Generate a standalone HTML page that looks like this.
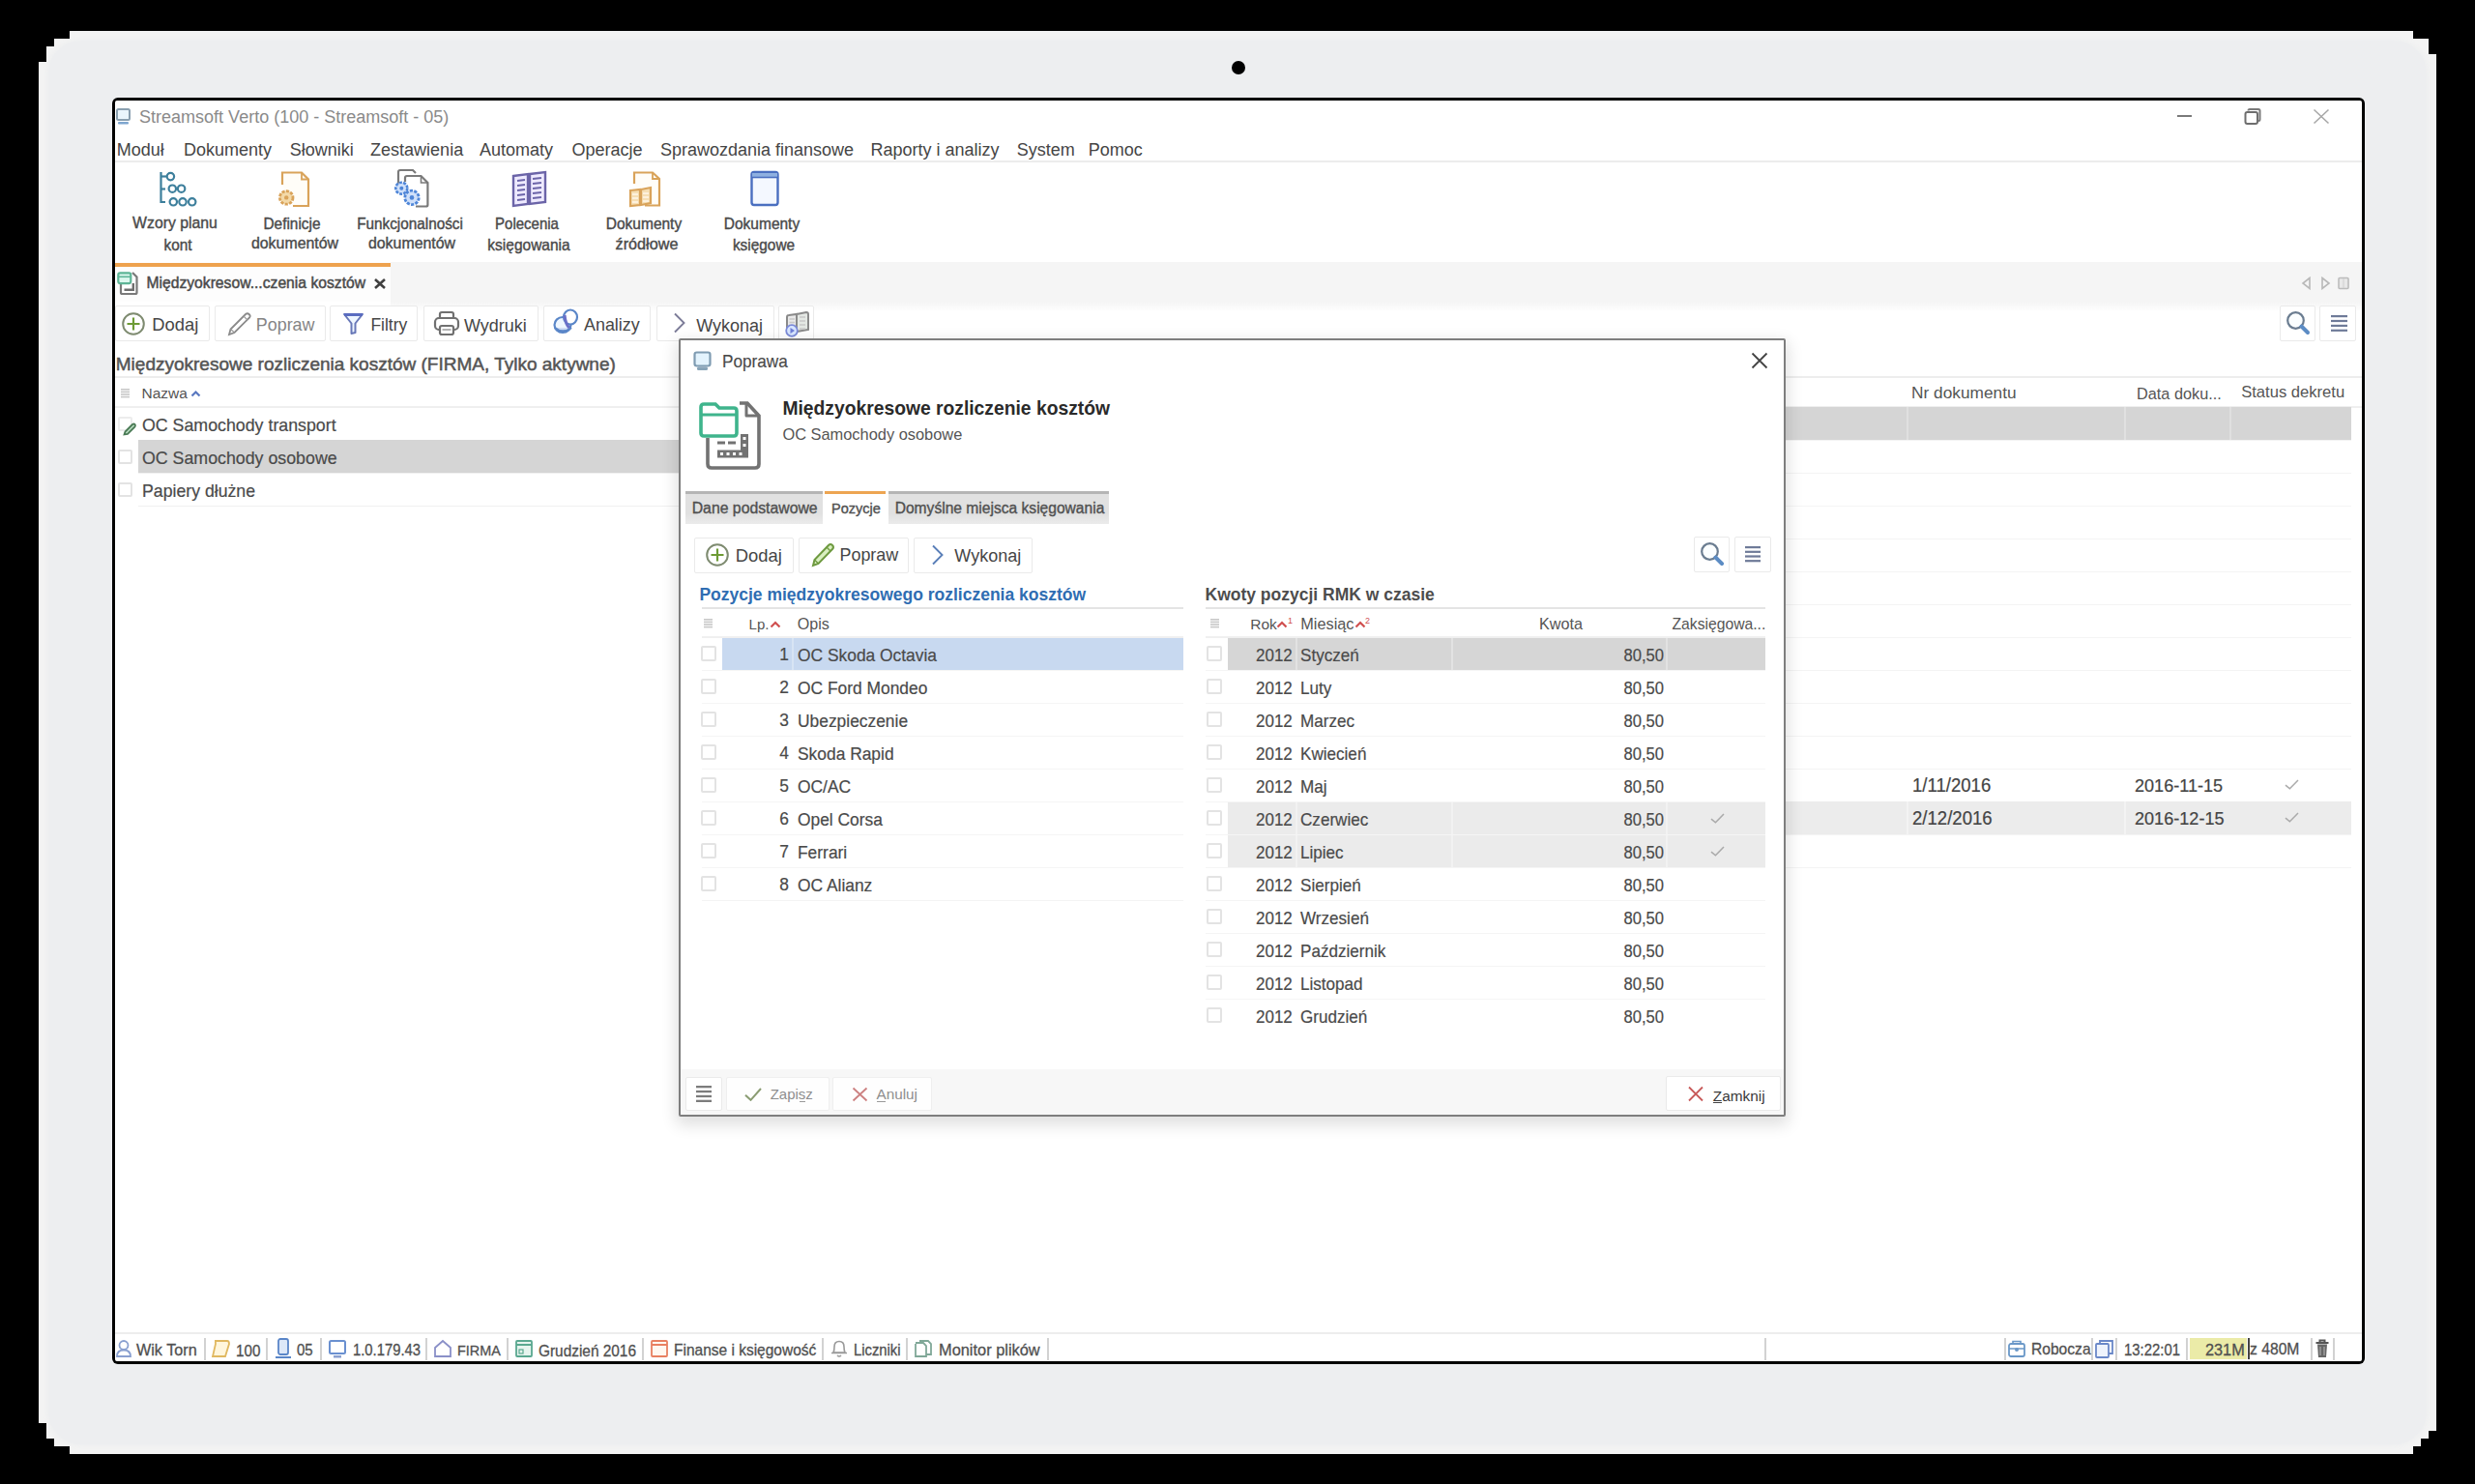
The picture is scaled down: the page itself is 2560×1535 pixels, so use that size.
<!DOCTYPE html><html><head><meta charset="utf-8"><style>
html,body{margin:0;padding:0;background:#000;}
body{width:2560px;height:1535px;position:relative;overflow:hidden;font-family:"Liberation Sans",sans-serif;}
.t{position:absolute;white-space:nowrap;line-height:1em;}
.r{position:absolute;}
</style></head><body>
<div class="r" style="left:40px;top:32px;width:2480px;height:1472px;background:#f3f3f3;"></div>
<div class="r" style="left:50px;top:42px;width:2460px;height:1452px;background:#edeef0;border-radius:34px;box-shadow:0 0 4px 2px #eeeff0;"></div>
<div class="r" style="left:40px;top:32px;width:32px;height:8px;background:#000;"></div>
<div class="r" style="left:40px;top:40px;width:16px;height:8px;background:#000;"></div>
<div class="r" style="left:40px;top:48px;width:8px;height:16px;background:#000;"></div>
<div class="r" style="left:2496px;top:32px;width:24px;height:8px;background:#000;"></div>
<div class="r" style="left:2512px;top:40px;width:8px;height:16px;background:#000;"></div>
<div class="r" style="left:2496px;top:1496px;width:24px;height:8px;background:#000;"></div>
<div class="r" style="left:2504px;top:1488px;width:16px;height:8px;background:#000;"></div>
<div class="r" style="left:2512px;top:1480px;width:8px;height:8px;background:#000;"></div>
<div class="r" style="left:40px;top:1472px;width:8px;height:16px;background:#000;"></div>
<div class="r" style="left:40px;top:1488px;width:16px;height:8px;background:#000;"></div>
<div class="r" style="left:40px;top:1496px;width:32px;height:8px;background:#000;"></div>
<div class="r" style="left:1274px;top:63px;width:14px;height:14px;background:#000;border-radius:50%;"></div>
<div class="r" style="left:116px;top:101px;width:2330px;height:1310px;background:#000;border-radius:6px;"></div>
<div class="r" style="left:119px;top:104px;width:2324px;height:1304px;background:#fff;border-radius:2px;overflow:hidden;"></div>
<svg class="r" style="left:119px;top:111px" width="18" height="20" viewBox="0 0 18 20" fill="none"><rect x="2" y="2" width="13" height="11" rx="1.5" fill="#eaf6fd" stroke="#8aa0b0" stroke-width="2"/><rect x="3" y="15" width="11" height="2.5" rx="1" fill="#7ea6cf"/></svg>
<div class="t" style="left:144.1px;top:112.1px;font-size:18.00px;color:#8a8a8a;">Streamsoft Verto (100 - Streamsoft - 05)</div>
<div class="r" style="left:2252px;top:119px;width:15px;height:2px;background:#7a7a7a;"></div>
<svg class="r" style="left:2320px;top:111px" width="20" height="19" viewBox="0 0 20 19" fill="none"><path d="M5.5 3.5 Q5.5 2 7 2 H16 Q17.5 2 17.5 3.5 V12.5 Q17.5 14 16 14" stroke="#7a7a7a" stroke-width="2"/><rect x="2.5" y="5" width="12.5" height="12" rx="2" stroke="#6e6e6e" stroke-width="2" fill="#fff"/></svg>
<svg class="r" style="left:2392px;top:112px" width="18" height="17" viewBox="0 0 18 17" fill="none"><path d="M1.5 1.5 L16.5 15.5 M16.5 1.5 L1.5 15.5" stroke="#a8a8a8" stroke-width="1.6"/></svg>
<div class="t" style="left:120.8px;top:146.2px;font-size:18.00px;color:#454545;">Moduł</div>
<div class="t" style="left:189.9px;top:146.2px;font-size:18.00px;color:#454545;">Dokumenty</div>
<div class="t" style="left:299.8px;top:146.2px;font-size:18.00px;color:#454545;">Słowniki</div>
<div class="t" style="left:383.1px;top:146.2px;font-size:18.00px;color:#454545;">Zestawienia</div>
<div class="t" style="left:495.9px;top:146.2px;font-size:18.00px;color:#454545;">Automaty</div>
<div class="t" style="left:591.5px;top:146.2px;font-size:18.00px;color:#454545;">Operacje</div>
<div class="t" style="left:683.0px;top:146.2px;font-size:18.00px;color:#454545;">Sprawozdania finansowe</div>
<div class="t" style="left:900.4px;top:146.2px;font-size:18.00px;color:#454545;">Raporty i analizy</div>
<div class="t" style="left:1051.7px;top:146.2px;font-size:18.00px;color:#454545;">System</div>
<div class="t" style="left:1125.7px;top:146.2px;font-size:18.00px;color:#454545;">Pomoc</div>
<div class="r" style="left:119px;top:166px;width:2324px;height:2px;background:#ececec;"></div>
<div class="t" style="left:81.0px;top:222.9px;font-size:16.59px;color:#4a4a4a;-webkit-text-stroke:0.4px #4a4a4a;transform:scaleX(0.9524);transform-origin:center center;width:200px;text-align:center;">Wzory planu</div>
<div class="t" style="left:83.5px;top:244.6px;font-size:16.17px;color:#4a4a4a;-webkit-text-stroke:0.4px #4a4a4a;transform:scaleX(0.9524);transform-origin:center center;width:200px;text-align:center;">kont</div>
<div class="t" style="left:202.3px;top:223.2px;font-size:16.17px;color:#4a4a4a;-webkit-text-stroke:0.4px #4a4a4a;transform:scaleX(0.9524);transform-origin:center center;width:200px;text-align:center;">Definicje</div>
<div class="t" style="left:204.8px;top:244.2px;font-size:16.70px;color:#4a4a4a;-webkit-text-stroke:0.4px #4a4a4a;transform:scaleX(0.9524);transform-origin:center center;width:200px;text-align:center;">dokumentów</div>
<div class="t" style="left:323.8px;top:223.3px;font-size:16.07px;color:#4a4a4a;-webkit-text-stroke:0.4px #4a4a4a;transform:scaleX(0.9524);transform-origin:center center;width:200px;text-align:center;">Funkcjonalności</div>
<div class="t" style="left:326.3px;top:244.2px;font-size:16.70px;color:#4a4a4a;-webkit-text-stroke:0.4px #4a4a4a;transform:scaleX(0.9524);transform-origin:center center;width:200px;text-align:center;">dokumentów</div>
<div class="t" style="left:444.6px;top:223.6px;font-size:15.75px;color:#4a4a4a;-webkit-text-stroke:0.4px #4a4a4a;transform:scaleX(0.9524);transform-origin:center center;width:200px;text-align:center;">Polecenia</div>
<div class="t" style="left:447.1px;top:244.5px;font-size:16.28px;color:#4a4a4a;-webkit-text-stroke:0.4px #4a4a4a;transform:scaleX(0.9524);transform-origin:center center;width:200px;text-align:center;">księgowania</div>
<div class="t" style="left:566.2px;top:223.1px;font-size:16.28px;color:#4a4a4a;-webkit-text-stroke:0.4px #4a4a4a;transform:scaleX(0.9524);transform-origin:center center;width:200px;text-align:center;">Dokumenty</div>
<div class="t" style="left:568.7px;top:243.9px;font-size:17.01px;color:#4a4a4a;-webkit-text-stroke:0.4px #4a4a4a;transform:scaleX(0.9524);transform-origin:center center;width:200px;text-align:center;">źródłowe</div>
<div class="t" style="left:687.7px;top:223.1px;font-size:16.28px;color:#4a4a4a;-webkit-text-stroke:0.4px #4a4a4a;transform:scaleX(0.9524);transform-origin:center center;width:200px;text-align:center;">Dokumenty</div>
<div class="t" style="left:690.2px;top:244.6px;font-size:16.17px;color:#4a4a4a;-webkit-text-stroke:0.4px #4a4a4a;transform:scaleX(0.9524);transform-origin:center center;width:200px;text-align:center;">księgowe</div>
<svg class="r" style="left:162px;top:175px" width="44" height="42" viewBox="0 0 44 42" fill="none"><g stroke="#3d7f9c" stroke-width="2.2" fill="#fff">
<path d="M4.5 3 V34 H9" fill="none"/><path d="M4.5 20.5 H9" fill="none"/><path d="M4.5 7.5 H10" fill="none"/>
<circle cx="14.4" cy="7.6" r="3.7"/><circle cx="16.3" cy="20.2" r="3.7"/><circle cx="25.6" cy="20.2" r="3.7"/>
<circle cx="17.3" cy="33.8" r="3.7"/><circle cx="27" cy="33.8" r="3.7"/><circle cx="36.7" cy="33.8" r="3.7"/></g></svg>
<svg class="r" style="left:282px;top:174px" width="42" height="42" viewBox="0 0 42 42" fill="none"><path d="M10 17 V4.5 H30 L37 11.5 V39 H21" stroke="#d9a35a" stroke-width="2.2" fill="#fffdf8"/><path d="M30 4.5 V11.5 H37" stroke="#d9a35a" stroke-width="1.8" fill="none"/>
<circle cx="14.2" cy="30.4" r="6.8" fill="#f3d9a8" stroke="#d9a35a" stroke-width="2.8" stroke-dasharray="3.2 1.3"/><circle cx="14.2" cy="30.4" r="2.2" fill="#d9a35a"/></svg>
<svg class="r" style="left:406px;top:173px" width="44" height="44" viewBox="0 0 44 44" fill="none"><path d="M6 20 V5 Q6 3 8 3 H21 L24 6" stroke="#7a7a7a" stroke-width="2.2" fill="none"/>
<path d="M13 15 V11 Q13 9 15 9 H29.5 L36.4 16 V39 Q36.4 40.5 34.5 40.5 H24" stroke="#7a7a7a" stroke-width="2.2" fill="#fff"/><path d="M29.5 9 V16 H36.4" stroke="#7a7a7a" stroke-width="1.6" fill="none"/>
<circle cx="9.3" cy="21.7" r="6" fill="#cfe0fa" stroke="#4f86d8" stroke-width="2.6" stroke-dasharray="3 1.2"/><circle cx="9.3" cy="21.7" r="2" fill="#4f86d8"/>
<circle cx="20" cy="31.4" r="7.2" fill="#cfe0fa" stroke="#4f86d8" stroke-width="2.8" stroke-dasharray="3.2 1.3"/><circle cx="20" cy="31.4" r="2.3" fill="#4f86d8"/></svg>
<svg class="r" style="left:527px;top:174px" width="42" height="42" viewBox="0 0 42 42" fill="none"><path d="M4 8 L19 6 V37 L4 39 Z" stroke="#6b64a8" stroke-width="2.4" fill="#eeeaff"/><path d="M21 6 L37 4 V35 L21 37 Z" stroke="#6b64a8" stroke-width="2.4" fill="#eeeaff"/>
<g stroke="#6b64a8" stroke-width="2"><path d="M8 13 L16 12 M8 18 L16 17 M8 23 L16 22 M8 28 L16 27 M8 33 L16 32"/><path d="M24 11 L33 10 M24 16 L33 15 M24 21 L33 20 M24 26 L33 25 M24 31 L33 30"/></g></svg>
<svg class="r" style="left:648px;top:174px" width="40" height="42" viewBox="0 0 40 42" fill="none"><path d="M8 16 V4.5 H27 L34 11 V38.5 H19" stroke="#d9a35a" stroke-width="2.2" fill="#fffdf8"/><path d="M27 4.5 V11 H34" stroke="#d9a35a" stroke-width="1.8" fill="none"/>
<path d="M4 23 L14 22 V38 L4 39 Z M15 22 L25 20 V36 L15 38 Z" stroke="#d9a35a" stroke-width="2.2" fill="#f6dfb5"/>
<g stroke="#fff8ea" stroke-width="1.4"><path d="M6 27 H12 M6 31 H12 M6 35 H12 M17 26 H23 M17 30 H23 M17 34 H23"/></g></svg>
<svg class="r" style="left:773px;top:175px" width="36" height="40" viewBox="0 0 36 40" fill="none"><rect x="4.5" y="3" width="27" height="34" rx="2.5" stroke="#4a6fc0" stroke-width="2.4" fill="#f4f8ff"/><rect x="5" y="4" width="26" height="4" fill="#8fb0e0"/><path d="M4.5 8.5 H31.5" stroke="#4a6fc0" stroke-width="1.6"/></svg>
<div class="r" style="left:119px;top:271px;width:2324px;height:41px;background:#f5f5f5;"></div>
<div class="r" style="left:404px;top:312px;width:2039px;height:9px;background:linear-gradient(#f5f5f5,#fdfdfd);"></div>
<div class="r" style="left:119px;top:271px;width:285px;height:41px;background:#fdfdfd;"></div>
<div class="r" style="left:119px;top:272px;width:285px;height:4px;background:#eea24e;"></div>
<svg class="r" style="left:120px;top:280px" width="26" height="27" viewBox="0 0 26 27" fill="none"><path d="M5 11 V22.5 Q5 24 6.5 24 H20 Q21.5 24 21.5 22.5 V6.5 L17 2" stroke="#7a7a7a" stroke-width="2.2" fill="#fff"/>
<rect x="2.3" y="2.3" width="13" height="10.8" rx="2" stroke="#5db596" stroke-width="2.2" fill="#dcf7ee"/><path d="M2.5 6.3 H15.3" stroke="#5db596" stroke-width="1.6"/>
<path d="M8.5 19.8 H17.8 V13" stroke="#6e6e6e" stroke-width="2.4"/></svg>
<div class="t" style="left:151.4px;top:284.7px;font-size:15.70px;color:#4a4a4a;-webkit-text-stroke:0.45px #4a4a4a;">Międzyokresow...czenia kosztów</div>
<svg class="r" style="left:386px;top:287px" width="14" height="13" viewBox="0 0 14 13" fill="none"><path d="M2 2 L12 11 M12 2 L2 11" stroke="#404040" stroke-width="2.6"/></svg>
<svg class="r" style="left:2380px;top:286px" width="12" height="14" viewBox="0 0 12 14" fill="none"><path d="M9 1.5 L2 7 L9 12.5 Z" stroke="#b8b8b8" stroke-width="1.6" fill="none"/></svg>
<svg class="r" style="left:2399px;top:286px" width="12" height="14" viewBox="0 0 12 14" fill="none"><path d="M3 1.5 L10 7 L3 12.5 Z" stroke="#b8b8b8" stroke-width="1.6" fill="none"/></svg>
<svg class="r" style="left:2417px;top:286px" width="14" height="14" viewBox="0 0 14 14" fill="none"><rect x="2" y="1.5" width="10" height="11" rx="1" stroke="#bcbcbc" stroke-width="1.6" fill="#e8e8e8"/><path d="M7 2 V12" stroke="#cfcfcf" stroke-width="1"/></svg>
<div class="r" style="left:119px;top:316px;width:97.5px;height:37px;background:#fff;box-sizing:border-box;border:1.5px solid #eaeaea;border-radius:2px;"></div>
<div class="r" style="left:222px;top:316px;width:115px;height:37px;background:#fff;box-sizing:border-box;border:1.5px solid #eaeaea;border-radius:2px;"></div>
<div class="r" style="left:340.5px;top:316px;width:91.5px;height:37px;background:#fff;box-sizing:border-box;border:1.5px solid #eaeaea;border-radius:2px;"></div>
<div class="r" style="left:437.5px;top:316px;width:119.79999999999995px;height:37px;background:#fff;box-sizing:border-box;border:1.5px solid #eaeaea;border-radius:2px;"></div>
<div class="r" style="left:562.4px;top:316px;width:110.30000000000007px;height:37px;background:#fff;box-sizing:border-box;border:1.5px solid #eaeaea;border-radius:2px;"></div>
<div class="r" style="left:678.6px;top:316px;width:122.19999999999993px;height:37px;background:#fff;box-sizing:border-box;border:1.5px solid #eaeaea;border-radius:2px;"></div>
<div class="r" style="left:805px;top:316px;width:37.39999999999998px;height:37px;background:#fff;box-sizing:border-box;border:1.5px solid #eaeaea;border-radius:2px;"></div>
<div class="r" style="left:2357.5px;top:316px;width:37.0px;height:37px;background:#fff;box-sizing:border-box;border:1.5px solid #eaeaea;border-radius:2px;"></div>
<div class="r" style="left:2398.8px;top:316px;width:38.29999999999973px;height:37px;background:#fff;box-sizing:border-box;border:1.5px solid #eaeaea;border-radius:2px;"></div>
<div class="t" style="left:157.2px;top:327.1px;font-size:18.40px;color:#464646;">Dodaj</div>
<div class="t" style="left:264.8px;top:327.5px;font-size:17.90px;color:#858585;">Popraw</div>
<div class="t" style="left:383.4px;top:327.9px;font-size:17.50px;color:#464646;">Filtry</div>
<div class="t" style="left:480.0px;top:327.5px;font-size:18.00px;color:#464646;">Wydruki</div>
<div class="t" style="left:604.0px;top:327.5px;font-size:17.90px;color:#464646;">Analizy</div>
<div class="t" style="left:720.2px;top:327.5px;font-size:18.00px;color:#464646;">Wykonaj</div>
<svg class="r" style="left:125.19999999999999px;top:322.3px" width="26" height="26" viewBox="0 0 26 26" fill="none"><circle cx="13" cy="13" r="10.8" stroke="#7e8b70" stroke-width="2"/><path d="M6.5 13 H19.5 M13 6.5 V19.5" stroke="#6d9b35" stroke-width="2.2"/></svg>
<svg class="r" style="left:232px;top:322px" width="30" height="28" viewBox="0 0 30 28" fill="none"><path d="M5 24 L6.5 18.5 L22 3 Q24 1.5 25.5 3 L26 3.5 Q27.5 5 26 6.5 L10.5 22 Z" stroke="#8a8a8a" stroke-width="1.8" fill="#fff"/><path d="M6.5 18.5 L10.5 22 M20 5 L24 9" stroke="#9a9a9a" stroke-width="1.2"/></svg>
<svg class="r" style="left:353px;top:322px" width="26" height="26" viewBox="0 0 26 26" fill="none"><path d="M3 3 H22 L14.5 12.5 V22 L10.5 23 V12.5 Z" stroke="#6878b8" stroke-width="2" fill="#eef6ff" stroke-linejoin="round"/><path d="M3 3.5 H22" stroke="#5a6cc0" stroke-width="3"/></svg>
<svg class="r" style="left:447px;top:320px" width="30" height="30" viewBox="0 0 30 30" fill="none"><rect x="8" y="3" width="14" height="7" rx="2" stroke="#707070" stroke-width="2.2" fill="#fff"/><rect x="3" y="9" width="24" height="12" rx="4" stroke="#707070" stroke-width="2.2" fill="#fff"/><rect x="8" y="17" width="14" height="9" rx="2" stroke="#707070" stroke-width="2.2" fill="#fff"/><path d="M10.5 21 H19.5" stroke="#999" stroke-width="1.5"/></svg>
<svg class="r" style="left:571px;top:318px" width="30" height="30" viewBox="0 0 30 30" fill="none"><ellipse cx="11" cy="18" rx="8.5" ry="8" stroke="#5a86c8" stroke-width="2.2" fill="#eef6ff"/><path d="M3 21 Q11 28 20 21" stroke="#5a86c8" stroke-width="2.2" fill="#cfdcf5"/><ellipse cx="19" cy="10" rx="7" ry="7.5" stroke="#5a86c8" stroke-width="2.2" fill="#fff"/><path d="M13 8 Q14 18 18 21" stroke="#6a70c8" stroke-width="3"/></svg>
<svg class="r" style="left:695px;top:322px" width="16" height="24" viewBox="0 0 16 24" fill="none"><path d="M3 2.5 L12.5 12 L3 21.5" stroke="#7c7c98" stroke-width="1.9" fill="none"/></svg>
<svg class="r" style="left:810px;top:320px" width="30" height="30" viewBox="0 0 30 30" fill="none"><path d="M4 8 Q4 6 6 6 L14 5 V22 L4 23 Z" stroke="#8a8a8a" stroke-width="2" fill="#e9e9e9"/><path d="M14 5 L24 3 Q26 3 26 5 V21 L14 23 Z" stroke="#8a8a8a" stroke-width="2" fill="#e4e8e4"/><path d="M6.5 10 H12 M6.5 13.5 H12 M17 8 H23 M17 12 H23 M17 16 H23 M17 20 H23" stroke="#c8c8c8" stroke-width="1.5"/><circle cx="9" cy="22" r="5.8" stroke="#7b8ad8" stroke-width="1.8" fill="#d8e6ff"/><path d="M7.5 19 L12 22 L7.5 25 Z" fill="#6f7fd8"/></svg>
<svg class="r" style="left:2363px;top:320px" width="28" height="28" viewBox="0 0 28 28" fill="none"><circle cx="11.5" cy="11.5" r="8.3" stroke="#6a7c90" stroke-width="2.2" fill="#fbfeff"/><path d="M17.5 17.5 L24 24" stroke="#5c8cc4" stroke-width="4" stroke-linecap="round"/></svg>
<svg class="r" style="left:2410.9px;top:325.8px" width="17" height="17" viewBox="0 0 17 17" fill="none"><rect x="0" y="0.0" width="17" height="2.2" fill="#6e7a98"/><rect x="0" y="4.9" width="17" height="2.2" fill="#6e7a98"/><rect x="0" y="9.8" width="17" height="2.2" fill="#6e7a98"/><rect x="0" y="14.7" width="17" height="2.2" fill="#6e7a98"/></svg>
<div class="t" style="left:119.8px;top:367.4px;font-size:19.00px;color:#555;-webkit-text-stroke:0.5px #555;">Międzyokresowe rozliczenia kosztów (FIRMA, Tylko aktywne)</div>
<div class="r" style="left:119px;top:389px;width:2324px;height:2px;background:#ededed;"></div>
<svg class="r" style="left:124.7px;top:401.5px" width="9" height="10" viewBox="0 0 9 10" fill="none"><rect x="0" y="0.0" width="9" height="1.6" fill="#c8c8c8"/><rect x="0" y="2.6" width="9" height="1.6" fill="#c8c8c8"/><rect x="0" y="5.2" width="9" height="1.6" fill="#c8c8c8"/><rect x="0" y="7.8" width="9" height="1.6" fill="#c8c8c8"/></svg>
<div class="t" style="left:146.5px;top:398.9px;font-size:15.50px;color:#555;">Nazwa</div>
<svg class="r" style="left:197px;top:403px" width="11" height="8" viewBox="0 0 11 8" fill="none"><path d="M1.5 6.5 L5.5 2.5 L9.5 6.5" stroke="#5a78c0" stroke-width="2.2" fill="none"/></svg>
<div class="t" style="left:1977.0px;top:397.7px;font-size:17.30px;color:#555;">Nr dokumentu</div>
<div class="t" style="left:2210.0px;top:398.5px;font-size:16.30px;color:#555;">Data doku...</div>
<div class="t" style="left:2318.2px;top:398.2px;font-size:16.60px;color:#555;">Status dekretu</div>
<div class="r" style="left:119px;top:420px;width:2324px;height:2px;background:#efefef;"></div>
<div class="r" style="left:143px;top:455px;width:560px;height:1px;background:#f1f1f1;"></div>
<div class="r" style="left:1847px;top:455px;width:585px;height:1px;background:#f4f4f4;"></div>
<div class="r" style="left:143px;top:489px;width:560px;height:1px;background:#f1f1f1;"></div>
<div class="r" style="left:1847px;top:489px;width:585px;height:1px;background:#f4f4f4;"></div>
<div class="r" style="left:143px;top:523px;width:560px;height:1px;background:#f1f1f1;"></div>
<div class="r" style="left:1847px;top:523px;width:585px;height:1px;background:#f4f4f4;"></div>
<div class="r" style="left:1847px;top:557px;width:585px;height:1px;background:#f4f4f4;"></div>
<div class="r" style="left:1847px;top:591px;width:585px;height:1px;background:#f4f4f4;"></div>
<div class="r" style="left:1847px;top:625px;width:585px;height:1px;background:#f4f4f4;"></div>
<div class="r" style="left:1847px;top:659px;width:585px;height:1px;background:#f4f4f4;"></div>
<div class="r" style="left:1847px;top:693px;width:585px;height:1px;background:#f4f4f4;"></div>
<div class="r" style="left:1847px;top:727px;width:585px;height:1px;background:#f4f4f4;"></div>
<div class="r" style="left:1847px;top:761px;width:585px;height:1px;background:#f4f4f4;"></div>
<div class="r" style="left:1847px;top:795px;width:585px;height:1px;background:#f4f4f4;"></div>
<div class="r" style="left:1847px;top:829px;width:585px;height:1px;background:#f4f4f4;"></div>
<div class="r" style="left:1847px;top:863px;width:585px;height:1px;background:#f4f4f4;"></div>
<div class="r" style="left:1847px;top:897px;width:585px;height:1px;background:#f4f4f4;"></div>
<div class="r" style="left:143px;top:455px;width:560px;height:34px;background:#d5d5d5;"></div>
<div class="r" style="left:1847px;top:421px;width:585px;height:34px;background:#d5d5d5;"></div>
<div class="r" style="left:1972px;top:421px;width:2px;height:34px;background:#e0e0e0;"></div>
<div class="r" style="left:2197px;top:421px;width:2px;height:34px;background:#e0e0e0;"></div>
<div class="r" style="left:2306px;top:421px;width:2px;height:34px;background:#e0e0e0;"></div>
<div class="r" style="left:1847px;top:829px;width:585px;height:34px;background:#ececec;"></div>
<div class="r" style="left:1972px;top:829px;width:2px;height:34px;background:#f3f3f3;"></div>
<div class="r" style="left:2197px;top:829px;width:2px;height:34px;background:#f3f3f3;"></div>
<div class="r" style="left:122.3px;top:430.5px;width:15px;height:15px;box-sizing:border-box;border:2px solid #ececec;border-radius:2px;background:#fff"></div>
<div class="r" style="left:122.3px;top:464.5px;width:15px;height:15px;box-sizing:border-box;border:2px solid #e3e3e3;border-radius:2px;background:#fff"></div>
<div class="r" style="left:122.3px;top:498.5px;width:15px;height:15px;box-sizing:border-box;border:2px solid #e3e3e3;border-radius:2px;background:#fff"></div>
<svg class="r" style="left:126px;top:436px" width="16" height="16" viewBox="0 0 16 16" fill="none"><path d="M2.5 13.5 L3.5 10.5 L11 3 Q12.5 2 13.5 3 Q14.5 4 13.5 5.5 L6 13 Z" stroke="#4a7a55" stroke-width="1.8" fill="#b8dcc0"/></svg>
<div class="t" style="left:146.5px;top:430.2px;font-size:19.22px;color:#4a4a4a;-webkit-text-stroke:0.2px #4a4a4a;transform:scaleX(0.9259);transform-origin:left center;">OC Samochody transport</div>
<div class="t" style="left:146.5px;top:464.2px;font-size:19.22px;color:#4a4a4a;-webkit-text-stroke:0.2px #4a4a4a;transform:scaleX(0.9259);transform-origin:left center;">OC Samochody osobowe</div>
<div class="t" style="left:146.5px;top:498.3px;font-size:19.12px;color:#4a4a4a;-webkit-text-stroke:0.2px #4a4a4a;transform:scaleX(0.9259);transform-origin:left center;">Papiery dłużne</div>
<div class="t" style="left:1977.9px;top:803.2px;font-size:19.34px;color:#444;-webkit-text-stroke:0.2px #444;transform:scaleX(0.9615);transform-origin:left center;">1/11/2016</div>
<div class="t" style="left:2207.9px;top:803.7px;font-size:18.82px;color:#444;-webkit-text-stroke:0.2px #444;transform:scaleX(0.9615);transform-origin:left center;">2016-11-15</div>
<div class="t" style="left:1977.9px;top:837.2px;font-size:19.34px;color:#444;-webkit-text-stroke:0.2px #444;transform:scaleX(0.9615);transform-origin:left center;">2/12/2016</div>
<div class="t" style="left:2207.9px;top:837.7px;font-size:18.82px;color:#444;-webkit-text-stroke:0.2px #444;transform:scaleX(0.9615);transform-origin:left center;">2016-12-15</div>
<svg class="r" style="left:2363px;top:805.5px" width="15" height="11" viewBox="0 0 15 11" fill="none"><path d="M1 6.1 L5.4 9.8 L14 1" stroke="#aaaaaa" stroke-width="1.5" fill="none"/></svg>
<svg class="r" style="left:2363px;top:839.5px" width="15" height="11" viewBox="0 0 15 11" fill="none"><path d="M1 6.1 L5.4 9.8 L14 1" stroke="#aaaaaa" stroke-width="1.5" fill="none"/></svg>
<div class="r" style="left:119px;top:1378px;width:2324px;height:2px;background:#ededed;"></div>
<div class="r" style="left:211px;top:1384px;width:2px;height:23px;background:#d2d2d2;"></div>
<div class="r" style="left:275px;top:1384px;width:2px;height:23px;background:#d2d2d2;"></div>
<div class="r" style="left:331px;top:1384px;width:2px;height:23px;background:#d2d2d2;"></div>
<div class="r" style="left:440px;top:1384px;width:2px;height:23px;background:#d2d2d2;"></div>
<div class="r" style="left:524px;top:1384px;width:2px;height:23px;background:#d2d2d2;"></div>
<div class="r" style="left:664px;top:1384px;width:2px;height:23px;background:#d2d2d2;"></div>
<div class="r" style="left:850px;top:1384px;width:2px;height:23px;background:#d2d2d2;"></div>
<div class="r" style="left:937px;top:1384px;width:2px;height:23px;background:#d2d2d2;"></div>
<div class="r" style="left:1083px;top:1384px;width:2px;height:23px;background:#d2d2d2;"></div>
<div class="r" style="left:1825px;top:1384px;width:2px;height:23px;background:#d2d2d2;"></div>
<div class="r" style="left:2073px;top:1384px;width:2px;height:23px;background:#d2d2d2;"></div>
<div class="r" style="left:2163px;top:1384px;width:2px;height:23px;background:#d2d2d2;"></div>
<div class="r" style="left:2188px;top:1384px;width:2px;height:23px;background:#d2d2d2;"></div>
<div class="r" style="left:2261px;top:1384px;width:2px;height:23px;background:#d2d2d2;"></div>
<div class="r" style="left:2390px;top:1384px;width:2px;height:23px;background:#d2d2d2;"></div>
<div class="r" style="left:2413px;top:1384px;width:2px;height:23px;background:#d2d2d2;"></div>
<div class="r" style="left:2265px;top:1384px;width:59px;height:22px;background:#ebeba8;"></div>
<div class="r" style="left:2325px;top:1384px;width:2px;height:22px;background:#444;"></div>
<div class="t" style="left:141.3px;top:1387.8px;font-size:17.17px;color:#505050;-webkit-text-stroke:0.3px #505050;transform:scaleX(0.9434);transform-origin:left center;">Wik Torn</div>
<div class="t" style="left:244.3px;top:1388.7px;font-size:16.11px;color:#505050;-webkit-text-stroke:0.3px #505050;transform:scaleX(0.9434);transform-origin:left center;">100</div>
<div class="t" style="left:307.0px;top:1388.8px;font-size:15.90px;color:#505050;-webkit-text-stroke:0.3px #505050;transform:scaleX(0.9434);transform-origin:left center;">05</div>
<div class="t" style="left:364.5px;top:1389.0px;font-size:15.69px;color:#505050;-webkit-text-stroke:0.3px #505050;transform:scaleX(0.9434);transform-origin:left center;">1.0.179.43</div>
<div class="t" style="left:472.6px;top:1389.4px;font-size:15.26px;color:#505050;-webkit-text-stroke:0.3px #505050;transform:scaleX(0.9434);transform-origin:left center;">FIRMA</div>
<div class="t" style="left:556.5px;top:1388.5px;font-size:16.32px;color:#505050;-webkit-text-stroke:0.3px #505050;transform:scaleX(0.9434);transform-origin:left center;">Grudzień 2016</div>
<div class="t" style="left:697.0px;top:1388.4px;font-size:16.43px;color:#505050;-webkit-text-stroke:0.3px #505050;transform:scaleX(0.9434);transform-origin:left center;">Finanse i księgowość</div>
<div class="t" style="left:882.8px;top:1389.0px;font-size:15.69px;color:#505050;-webkit-text-stroke:0.3px #505050;transform:scaleX(0.9434);transform-origin:left center;">Liczniki</div>
<div class="t" style="left:970.7px;top:1387.6px;font-size:17.38px;color:#505050;-webkit-text-stroke:0.3px #505050;transform:scaleX(0.9434);transform-origin:left center;">Monitor plików</div>
<div class="t" style="left:2100.5px;top:1388.3px;font-size:16.54px;color:#505050;-webkit-text-stroke:0.3px #505050;transform:scaleX(0.9434);transform-origin:left center;">Robocza</div>
<div class="t" style="left:2197.4px;top:1388.9px;font-size:15.79px;color:#505050;-webkit-text-stroke:0.3px #505050;transform:scaleX(0.9434);transform-origin:left center;">13:22:01</div>
<div class="t" style="left:2281.0px;top:1387.7px;font-size:17.28px;color:#505050;-webkit-text-stroke:0.3px #505050;transform:scaleX(0.9434);transform-origin:left center;">231M</div>
<div class="t" style="left:2326.6px;top:1388.2px;font-size:16.64px;color:#505050;-webkit-text-stroke:0.3px #505050;transform:scaleX(0.9434);transform-origin:left center;">z 480M</div>
<svg class="r" style="left:119px;top:1385px" width="18" height="20" viewBox="0 0 18 20" fill="none"><circle cx="9" cy="6.5" r="4.5" stroke="#8aa0d0" stroke-width="1.8" fill="#fff"/><path d="M2 18 Q2 11.5 9 11.5 Q16 11.5 16 18 Z" stroke="#8aa0d0" stroke-width="1.8" fill="#fff"/></svg>
<svg class="r" style="left:217px;top:1384px" width="22" height="22" viewBox="0 0 22 22" fill="none"><path d="M5 3 H18 Q20 3 20 6 L16 19 H3 L6 6 Q6 3 5 3" stroke="#e0b860" stroke-width="1.8" fill="#fff6dc"/></svg>
<svg class="r" style="left:284px;top:1383px" width="18" height="24" viewBox="0 0 18 24" fill="none"><rect x="4" y="2" width="10" height="16" rx="2" stroke="#5a86c8" stroke-width="1.8" fill="#dde8f8"/><path d="M1 21 H17" stroke="#5a86c8" stroke-width="2"/></svg>
<svg class="r" style="left:339px;top:1385px" width="20" height="22" viewBox="0 0 20 22" fill="none"><rect x="2" y="2" width="16" height="13" rx="1.5" stroke="#6a90d0" stroke-width="2" fill="#fff"/><rect x="6" y="17" width="8" height="2.5" fill="#8aa0d0"/></svg>
<svg class="r" style="left:448px;top:1385px" width="20" height="20" viewBox="0 0 20 20" fill="none"><path d="M2 9 L10 2 L18 9 V18 H2 Z" stroke="#8a90c8" stroke-width="1.8" fill="#fff"/></svg>
<svg class="r" style="left:532px;top:1384px" width="20" height="22" viewBox="0 0 20 22" fill="none"><rect x="2" y="3" width="16" height="16" rx="1" stroke="#5aa890" stroke-width="1.8" fill="#e6f4ee"/><path d="M2 7 H18" stroke="#5aa890" stroke-width="2"/><rect x="5" y="12" width="4" height="4" stroke="#5aa890" stroke-width="1.2"/></svg>
<svg class="r" style="left:672px;top:1384px" width="20" height="22" viewBox="0 0 20 22" fill="none"><rect x="2" y="3" width="16" height="16" rx="1" stroke="#e88060" stroke-width="1.8" fill="#fff8f0"/><path d="M2 7 H18" stroke="#e88060" stroke-width="2"/></svg>
<svg class="r" style="left:858px;top:1384px" width="20" height="22" viewBox="0 0 20 22" fill="none"><path d="M4 15 Q5 13 5 9 Q5 3.5 10 3.5 Q15 3.5 15 9 Q15 13 16 15 Z" stroke="#9a9a9a" stroke-width="1.6" fill="#fff"/><path d="M2 15.5 H18 M8 18 Q10 20 12 18" stroke="#9a9a9a" stroke-width="1.6"/></svg>
<svg class="r" style="left:944px;top:1384px" width="22" height="22" viewBox="0 0 22 22" fill="none"><path d="M3 6 V19 H14 V8 L11 5 H3" stroke="#80a898" stroke-width="1.8" fill="#fff"/><path d="M7 3 H16 L19 6 V17 H14" stroke="#80a898" stroke-width="1.8" fill="none"/></svg>
<svg class="r" style="left:2076px;top:1385px" width="20" height="20" viewBox="0 0 20 20" fill="none"><rect x="2" y="5" width="16" height="13" rx="2" stroke="#6a98c8" stroke-width="1.8" fill="#fff"/><path d="M6 5 V2.5 H14 V5 M2 10 H18" stroke="#6a98c8" stroke-width="1.6"/><circle cx="10" cy="11" r="2" fill="#6a98c8"/></svg>
<svg class="r" style="left:2166px;top:1384px" width="22" height="22" viewBox="0 0 22 22" fill="none"><rect x="2" y="6" width="13" height="14" rx="1" stroke="#6a88c8" stroke-width="1.8" fill="#eef3fc"/><path d="M6 6 V3 H19 V16 H15" stroke="#6a88c8" stroke-width="1.8" fill="none"/></svg>
<svg class="r" style="left:2394px;top:1384px" width="16" height="22" viewBox="0 0 16 22" fill="none"><path d="M1.5 5 H14.5 M5.5 5 V2.5 H10.5 V5" stroke="#555" stroke-width="2"/><path d="M3 6.5 H13 L12 20 H4 Z" fill="#666"/><path d="M6 9 V18 M10 9 V18" stroke="#aaa" stroke-width="1.2"/></svg>
<div class="r" style="left:702px;top:350px;width:1145px;height:805px;box-shadow:0 6px 16px 3px rgba(0,0,0,0.12);background:#fff;box-sizing:border-box;border:2px solid #7e7e7e;border-radius:2px;"></div>
<svg class="r" style="left:716px;top:362px" width="22" height="24" viewBox="0 0 22 24" fill="none"><rect x="2.5" y="2.5" width="16" height="14" rx="2.2" stroke="#7f9cb2" stroke-width="2.2" fill="#e3f3fd"/><rect x="5" y="17.5" width="11" height="3.5" rx="1.5" fill="#88a4b8"/></svg>
<div class="t" style="left:746.5px;top:364.7px;font-size:18.92px;color:#4a4a4a;-webkit-text-stroke:0.15px #4a4a4a;transform:scaleX(0.9091);transform-origin:left center;">Poprawa</div>
<svg class="r" style="left:1810px;top:363px" width="20" height="20" viewBox="0 0 20 20" fill="none"><path d="M2.5 2.5 L17.5 17.5 M17.5 2.5 L2.5 17.5" stroke="#444" stroke-width="1.8"/></svg>
<svg class="r" style="left:720px;top:413px" width="70" height="74" viewBox="0 0 70 74" fill="none"><path d="M12 40 V67 Q12 71 16 71 H61 Q65 71 65 67 V17 L53 4 H45" stroke="#727272" stroke-width="3.6" fill="#fff"/>
<path d="M52 4 V17 H65" stroke="#727272" stroke-width="3" fill="none" stroke-linejoin="round"/>
<path d="M5 8 Q5 5 8 5 H20 L24 9 H39 Q42 9 42 12 V35 Q42 38 39 38 H8 Q5 38 5 35 Z" stroke="#3fb48c" stroke-width="3.6" fill="#fff"/>
<path d="M6 16 H41" stroke="#3fb48c" stroke-width="3.2"/>
<path d="M22 45 H30 M33 45 H41" stroke="#727272" stroke-width="3"/>
<rect x="22" y="52.5" width="32" height="8" fill="#727272"/><rect x="46" y="36" width="8" height="24" fill="#727272"/>
<g fill="#fff"><rect x="25" y="55" width="3" height="3"/><rect x="31.5" y="55" width="3" height="3"/><rect x="38" y="55" width="3" height="3"/><rect x="44.5" y="55" width="3" height="3"/><rect x="48.5" y="39" width="3" height="3"/><rect x="48.5" y="46" width="3" height="3"/></g></svg>
<div class="t" style="left:809.4px;top:413.4px;font-size:19.30px;color:#2a2a2a;font-weight:bold;">Międzyokresowe rozliczenie kosztów</div>
<div class="t" style="left:809.4px;top:441.3px;font-size:16.40px;color:#555;">OC Samochody osobowe</div>
<div class="r" style="left:709px;top:508px;width:142px;height:34px;background:linear-gradient(#e1e1e1 65%,#ebebeb);border-top:3px solid #b5b5b5;box-sizing:border-box;"></div>
<div class="r" style="left:853px;top:508px;width:63px;height:34px;background:#fff;border-top:3px solid #eda552;box-sizing:border-box;"></div>
<div class="r" style="left:919px;top:508px;width:228px;height:34px;background:linear-gradient(#e1e1e1 65%,#ebebeb);border-top:3px solid #b5b5b5;box-sizing:border-box;"></div>
<div class="t" style="left:715.7px;top:517.7px;font-size:15.80px;color:#505050;-webkit-text-stroke:0.35px #505050;">Dane podstawowe</div>
<div class="t" style="left:860.1px;top:518.8px;font-size:14.50px;color:#505050;-webkit-text-stroke:0.35px #505050;">Pozycje</div>
<div class="t" style="left:925.7px;top:517.9px;font-size:15.60px;color:#505050;-webkit-text-stroke:0.35px #505050;">Domyślne miejsca księgowania</div>
<div class="r" style="left:718.2px;top:556px;width:103.19999999999993px;height:37px;background:#fff;box-sizing:border-box;border:1.5px solid #eaeaea;border-radius:2px;"></div>
<div class="r" style="left:825.9px;top:556px;width:114.30000000000007px;height:37px;background:#fff;box-sizing:border-box;border:1.5px solid #eaeaea;border-radius:2px;"></div>
<div class="r" style="left:944.7px;top:556px;width:123.29999999999995px;height:37px;background:#fff;box-sizing:border-box;border:1.5px solid #eaeaea;border-radius:2px;"></div>
<div class="r" style="left:1751.5px;top:555px;width:37.5px;height:37px;background:#fff;box-sizing:border-box;border:1.5px solid #eaeaea;border-radius:2px;"></div>
<div class="r" style="left:1793.6px;top:555px;width:38.40000000000009px;height:37px;background:#fff;box-sizing:border-box;border:1.5px solid #eaeaea;border-radius:2px;"></div>
<svg class="r" style="left:729.2px;top:561px" width="26" height="26" viewBox="0 0 26 26" fill="none"><circle cx="13" cy="13" r="10.8" stroke="#7e8b70" stroke-width="2"/><path d="M6.5 13 H19.5 M13 6.5 V19.5" stroke="#6d9b35" stroke-width="2.2"/></svg>
<div class="t" style="left:760.8px;top:565.8px;font-size:18.40px;color:#464646;">Dodaj</div>
<svg class="r" style="left:836px;top:559px" width="30" height="30" viewBox="0 0 30 30" fill="none"><path d="M5 26 L6.5 20 L21 5 Q23 3 25 5 Q27 7 25 9 L10.5 24 Z" stroke="#6e9a40" stroke-width="2" fill="#d9efc0"/><path d="M6.5 20 L10.5 24 M19 7 L23 11" stroke="#6e9a40" stroke-width="1.4"/></svg>
<div class="t" style="left:868.5px;top:566.2px;font-size:17.90px;color:#464646;">Popraw</div>
<svg class="r" style="left:962px;top:562px" width="16" height="24" viewBox="0 0 16 24" fill="none"><path d="M3 2.5 L12.5 12 L3 21.5" stroke="#5a7fb8" stroke-width="1.9" fill="none"/></svg>
<div class="t" style="left:987.3px;top:566.2px;font-size:18.00px;color:#464646;">Wykonaj</div>
<svg class="r" style="left:1757px;top:559px" width="28" height="28" viewBox="0 0 28 28" fill="none"><circle cx="11.5" cy="11.5" r="8.3" stroke="#6a7c90" stroke-width="2.2" fill="#fbfeff"/><path d="M17.5 17.5 L24 24" stroke="#5c8cc4" stroke-width="4" stroke-linecap="round"/></svg>
<svg class="r" style="left:1805px;top:565px" width="16" height="17" viewBox="0 0 16 17" fill="none"><rect x="0" y="0.0" width="16" height="2.2" fill="#6e7a98"/><rect x="0" y="4.7" width="16" height="2.2" fill="#6e7a98"/><rect x="0" y="9.4" width="16" height="2.2" fill="#6e7a98"/><rect x="0" y="14.1" width="16" height="2.2" fill="#6e7a98"/></svg>
<div class="t" style="left:723.4px;top:606.7px;font-size:17.50px;color:#2f6db2;font-weight:bold;">Pozycje międzyokresowego rozliczenia kosztów</div>
<div class="t" style="left:1246.5px;top:606.7px;font-size:17.50px;color:#4d4d4d;font-weight:bold;">Kwoty pozycji RMK w czasie</div>
<div class="r" style="left:726px;top:627.5px;width:498px;height:2.0px;background:#e4e4e4;"></div>
<div class="r" style="left:1247px;top:627.5px;width:579px;height:2.0px;background:#e4e4e4;"></div>
<svg class="r" style="left:728.3px;top:639.5px" width="9" height="10" viewBox="0 0 9 10" fill="none"><rect x="0" y="0.0" width="9" height="1.6" fill="#c8c8c8"/><rect x="0" y="2.6" width="9" height="1.6" fill="#c8c8c8"/><rect x="0" y="5.2" width="9" height="1.6" fill="#c8c8c8"/><rect x="0" y="7.8" width="9" height="1.6" fill="#c8c8c8"/></svg>
<svg class="r" style="left:1252px;top:639.5px" width="9" height="10" viewBox="0 0 9 10" fill="none"><rect x="0" y="0.0" width="9" height="1.6" fill="#c8c8c8"/><rect x="0" y="2.6" width="9" height="1.6" fill="#c8c8c8"/><rect x="0" y="5.2" width="9" height="1.6" fill="#c8c8c8"/><rect x="0" y="7.8" width="9" height="1.6" fill="#c8c8c8"/></svg>
<div class="t" style="left:774.6px;top:638.1px;font-size:15.00px;color:#555;">Lp.</div>
<svg class="r" style="left:796px;top:642px" width="12" height="8" viewBox="0 0 12 8" fill="none"><path d="M1.5 6.5 L6 2 L10.5 6.5" stroke="#d05050" stroke-width="2.2" fill="none"/></svg>
<div class="t" style="left:824.8px;top:637.2px;font-size:16.10px;color:#555;">Opis</div>
<div class="t" style="left:1293.2px;top:637.7px;font-size:15.50px;color:#555;">Rok</div>
<svg class="r" style="left:1320px;top:642px" width="12" height="8" viewBox="0 0 12 8" fill="none"><path d="M1.5 6.5 L6 2 L10.5 6.5" stroke="#d05050" stroke-width="2.2" fill="none"/></svg>
<div class="t" style="left:1332.0px;top:638.4px;font-size:9.00px;color:#d05050;">1</div>
<div class="t" style="left:1345.3px;top:637.0px;font-size:16.30px;color:#555;">Miesiąc</div>
<svg class="r" style="left:1401px;top:642px" width="12" height="8" viewBox="0 0 12 8" fill="none"><path d="M1.5 6.5 L6 2 L10.5 6.5" stroke="#d05050" stroke-width="2.2" fill="none"/></svg>
<div class="t" style="left:1412.0px;top:638.4px;font-size:9.00px;color:#d05050;">2</div>
<div class="t" style="left:1592.0px;top:637.1px;font-size:16.20px;color:#555;">Kwota</div>
<div class="t" style="left:1729.5px;top:637.5px;font-size:15.70px;color:#555;">Zaksięgowa...</div>
<div class="r" style="left:726px;top:658px;width:498px;height:2px;background:#f0f0f0;"></div>
<div class="r" style="left:1247px;top:658px;width:579px;height:2px;background:#f0f0f0;"></div>
<div class="r" style="left:746.5px;top:660px;width:477.79999999999995px;height:33px;background:#c8d9f0;"></div>
<div class="r" style="left:819px;top:660px;width:2px;height:33px;background:#d8e4f4;"></div>
<div class="r" style="left:725px;top:668.0px;width:16px;height:16px;box-sizing:border-box;border:2px solid #e3e3e3;border-radius:2px;background:#fff"></div>
<div class="t" style="left:796.3px;top:668.4px;font-size:18.97px;color:#4a4a4a;-webkit-text-stroke:0.2px #4a4a4a;transform:scaleX(0.9174);transform-origin:right center;width:20px;text-align:right;">1</div>
<div class="t" style="left:824.6px;top:668.6px;font-size:18.79px;color:#4a4a4a;-webkit-text-stroke:0.2px #4a4a4a;transform:scaleX(0.9259);transform-origin:left center;">OC Skoda Octavia</div>
<div class="r" style="left:725px;top:702.0px;width:16px;height:16px;box-sizing:border-box;border:2px solid #e3e3e3;border-radius:2px;background:#fff"></div>
<div class="t" style="left:796.3px;top:702.4px;font-size:18.97px;color:#4a4a4a;-webkit-text-stroke:0.2px #4a4a4a;transform:scaleX(0.9174);transform-origin:right center;width:20px;text-align:right;">2</div>
<div class="t" style="left:824.6px;top:702.6px;font-size:18.79px;color:#4a4a4a;-webkit-text-stroke:0.2px #4a4a4a;transform:scaleX(0.9259);transform-origin:left center;">OC Ford Mondeo</div>
<div class="r" style="left:726px;top:693px;width:498px;height:1px;background:#f5f5f5;"></div>
<div class="r" style="left:725px;top:736.0px;width:16px;height:16px;box-sizing:border-box;border:2px solid #e3e3e3;border-radius:2px;background:#fff"></div>
<div class="t" style="left:796.3px;top:736.4px;font-size:18.97px;color:#4a4a4a;-webkit-text-stroke:0.2px #4a4a4a;transform:scaleX(0.9174);transform-origin:right center;width:20px;text-align:right;">3</div>
<div class="t" style="left:824.6px;top:736.6px;font-size:18.79px;color:#4a4a4a;-webkit-text-stroke:0.2px #4a4a4a;transform:scaleX(0.9259);transform-origin:left center;">Ubezpieczenie</div>
<div class="r" style="left:726px;top:727px;width:498px;height:1px;background:#f5f5f5;"></div>
<div class="r" style="left:725px;top:770.0px;width:16px;height:16px;box-sizing:border-box;border:2px solid #e3e3e3;border-radius:2px;background:#fff"></div>
<div class="t" style="left:796.3px;top:770.4px;font-size:18.97px;color:#4a4a4a;-webkit-text-stroke:0.2px #4a4a4a;transform:scaleX(0.9174);transform-origin:right center;width:20px;text-align:right;">4</div>
<div class="t" style="left:824.6px;top:770.6px;font-size:18.79px;color:#4a4a4a;-webkit-text-stroke:0.2px #4a4a4a;transform:scaleX(0.9259);transform-origin:left center;">Skoda Rapid</div>
<div class="r" style="left:726px;top:761px;width:498px;height:1px;background:#f5f5f5;"></div>
<div class="r" style="left:725px;top:804.0px;width:16px;height:16px;box-sizing:border-box;border:2px solid #e3e3e3;border-radius:2px;background:#fff"></div>
<div class="t" style="left:796.3px;top:804.4px;font-size:18.97px;color:#4a4a4a;-webkit-text-stroke:0.2px #4a4a4a;transform:scaleX(0.9174);transform-origin:right center;width:20px;text-align:right;">5</div>
<div class="t" style="left:824.6px;top:804.6px;font-size:18.79px;color:#4a4a4a;-webkit-text-stroke:0.2px #4a4a4a;transform:scaleX(0.9259);transform-origin:left center;">OC/AC</div>
<div class="r" style="left:726px;top:795px;width:498px;height:1px;background:#f5f5f5;"></div>
<div class="r" style="left:725px;top:838.0px;width:16px;height:16px;box-sizing:border-box;border:2px solid #e3e3e3;border-radius:2px;background:#fff"></div>
<div class="t" style="left:796.3px;top:838.4px;font-size:18.97px;color:#4a4a4a;-webkit-text-stroke:0.2px #4a4a4a;transform:scaleX(0.9174);transform-origin:right center;width:20px;text-align:right;">6</div>
<div class="t" style="left:824.6px;top:838.6px;font-size:18.79px;color:#4a4a4a;-webkit-text-stroke:0.2px #4a4a4a;transform:scaleX(0.9259);transform-origin:left center;">Opel Corsa</div>
<div class="r" style="left:726px;top:829px;width:498px;height:1px;background:#f5f5f5;"></div>
<div class="r" style="left:725px;top:872.0px;width:16px;height:16px;box-sizing:border-box;border:2px solid #e3e3e3;border-radius:2px;background:#fff"></div>
<div class="t" style="left:796.3px;top:872.4px;font-size:18.97px;color:#4a4a4a;-webkit-text-stroke:0.2px #4a4a4a;transform:scaleX(0.9174);transform-origin:right center;width:20px;text-align:right;">7</div>
<div class="t" style="left:824.6px;top:872.6px;font-size:18.79px;color:#4a4a4a;-webkit-text-stroke:0.2px #4a4a4a;transform:scaleX(0.9259);transform-origin:left center;">Ferrari</div>
<div class="r" style="left:726px;top:863px;width:498px;height:1px;background:#f5f5f5;"></div>
<div class="r" style="left:725px;top:906.0px;width:16px;height:16px;box-sizing:border-box;border:2px solid #e3e3e3;border-radius:2px;background:#fff"></div>
<div class="t" style="left:796.3px;top:906.4px;font-size:18.97px;color:#4a4a4a;-webkit-text-stroke:0.2px #4a4a4a;transform:scaleX(0.9174);transform-origin:right center;width:20px;text-align:right;">8</div>
<div class="t" style="left:824.6px;top:906.6px;font-size:18.79px;color:#4a4a4a;-webkit-text-stroke:0.2px #4a4a4a;transform:scaleX(0.9259);transform-origin:left center;">OC Alianz</div>
<div class="r" style="left:726px;top:897px;width:498px;height:1px;background:#f5f5f5;"></div>
<div class="r" style="left:726px;top:931px;width:498px;height:1px;background:#f4f4f4;"></div>
<div class="r" style="left:1270.2px;top:660px;width:556.3px;height:33px;background:#d6d6d6;"></div>
<div class="r" style="left:1340px;top:660px;width:2px;height:33px;background:#e2e2e2;"></div>
<div class="r" style="left:1501px;top:660px;width:2px;height:33px;background:#e2e2e2;"></div>
<div class="r" style="left:1723px;top:660px;width:2px;height:33px;background:#e2e2e2;"></div>
<div class="r" style="left:1270.2px;top:829px;width:556.3px;height:68px;background:#ebebeb;"></div>
<div class="r" style="left:1340px;top:829px;width:2px;height:68px;background:#f2f2f2;"></div>
<div class="r" style="left:1501px;top:829px;width:2px;height:68px;background:#f2f2f2;"></div>
<div class="r" style="left:1723px;top:829px;width:2px;height:68px;background:#f2f2f2;"></div>
<div class="r" style="left:1248px;top:668.0px;width:16px;height:16px;box-sizing:border-box;border:2px solid #e3e3e3;border-radius:2px;background:#fff"></div>
<div class="t" style="left:1299.2px;top:668.5px;font-size:18.87px;color:#4a4a4a;-webkit-text-stroke:0.2px #4a4a4a;transform:scaleX(0.9009);transform-origin:left center;">2012</div>
<div class="t" style="left:1345.3px;top:668.7px;font-size:18.64px;color:#4a4a4a;-webkit-text-stroke:0.2px #4a4a4a;transform:scaleX(0.9174);transform-origin:left center;">Styczeń</div>
<div class="t" style="left:1661.1px;top:668.8px;font-size:18.59px;color:#4a4a4a;-webkit-text-stroke:0.2px #4a4a4a;transform:scaleX(0.8929);transform-origin:right center;width:60px;text-align:right;">80,50</div>
<div class="r" style="left:1248px;top:702.0px;width:16px;height:16px;box-sizing:border-box;border:2px solid #e3e3e3;border-radius:2px;background:#fff"></div>
<div class="t" style="left:1299.2px;top:702.5px;font-size:18.87px;color:#4a4a4a;-webkit-text-stroke:0.2px #4a4a4a;transform:scaleX(0.9009);transform-origin:left center;">2012</div>
<div class="t" style="left:1345.3px;top:702.7px;font-size:18.64px;color:#4a4a4a;-webkit-text-stroke:0.2px #4a4a4a;transform:scaleX(0.9174);transform-origin:left center;">Luty</div>
<div class="t" style="left:1661.1px;top:702.8px;font-size:18.59px;color:#4a4a4a;-webkit-text-stroke:0.2px #4a4a4a;transform:scaleX(0.8929);transform-origin:right center;width:60px;text-align:right;">80,50</div>
<div class="r" style="left:1247px;top:693px;width:579px;height:1px;background:#f5f5f5;"></div>
<div class="r" style="left:1248px;top:736.0px;width:16px;height:16px;box-sizing:border-box;border:2px solid #e3e3e3;border-radius:2px;background:#fff"></div>
<div class="t" style="left:1299.2px;top:736.5px;font-size:18.87px;color:#4a4a4a;-webkit-text-stroke:0.2px #4a4a4a;transform:scaleX(0.9009);transform-origin:left center;">2012</div>
<div class="t" style="left:1345.3px;top:736.7px;font-size:18.64px;color:#4a4a4a;-webkit-text-stroke:0.2px #4a4a4a;transform:scaleX(0.9174);transform-origin:left center;">Marzec</div>
<div class="t" style="left:1661.1px;top:736.8px;font-size:18.59px;color:#4a4a4a;-webkit-text-stroke:0.2px #4a4a4a;transform:scaleX(0.8929);transform-origin:right center;width:60px;text-align:right;">80,50</div>
<div class="r" style="left:1247px;top:727px;width:579px;height:1px;background:#f5f5f5;"></div>
<div class="r" style="left:1248px;top:770.0px;width:16px;height:16px;box-sizing:border-box;border:2px solid #e3e3e3;border-radius:2px;background:#fff"></div>
<div class="t" style="left:1299.2px;top:770.5px;font-size:18.87px;color:#4a4a4a;-webkit-text-stroke:0.2px #4a4a4a;transform:scaleX(0.9009);transform-origin:left center;">2012</div>
<div class="t" style="left:1345.3px;top:770.7px;font-size:18.64px;color:#4a4a4a;-webkit-text-stroke:0.2px #4a4a4a;transform:scaleX(0.9174);transform-origin:left center;">Kwiecień</div>
<div class="t" style="left:1661.1px;top:770.8px;font-size:18.59px;color:#4a4a4a;-webkit-text-stroke:0.2px #4a4a4a;transform:scaleX(0.8929);transform-origin:right center;width:60px;text-align:right;">80,50</div>
<div class="r" style="left:1247px;top:761px;width:579px;height:1px;background:#f5f5f5;"></div>
<div class="r" style="left:1248px;top:804.0px;width:16px;height:16px;box-sizing:border-box;border:2px solid #e3e3e3;border-radius:2px;background:#fff"></div>
<div class="t" style="left:1299.2px;top:804.5px;font-size:18.87px;color:#4a4a4a;-webkit-text-stroke:0.2px #4a4a4a;transform:scaleX(0.9009);transform-origin:left center;">2012</div>
<div class="t" style="left:1345.3px;top:804.7px;font-size:18.64px;color:#4a4a4a;-webkit-text-stroke:0.2px #4a4a4a;transform:scaleX(0.9174);transform-origin:left center;">Maj</div>
<div class="t" style="left:1661.1px;top:804.8px;font-size:18.59px;color:#4a4a4a;-webkit-text-stroke:0.2px #4a4a4a;transform:scaleX(0.8929);transform-origin:right center;width:60px;text-align:right;">80,50</div>
<div class="r" style="left:1247px;top:795px;width:579px;height:1px;background:#f5f5f5;"></div>
<div class="r" style="left:1248px;top:838.0px;width:16px;height:16px;box-sizing:border-box;border:2px solid #e3e3e3;border-radius:2px;background:#fff"></div>
<div class="t" style="left:1299.2px;top:838.5px;font-size:18.87px;color:#4a4a4a;-webkit-text-stroke:0.2px #4a4a4a;transform:scaleX(0.9009);transform-origin:left center;">2012</div>
<div class="t" style="left:1345.3px;top:838.7px;font-size:18.64px;color:#4a4a4a;-webkit-text-stroke:0.2px #4a4a4a;transform:scaleX(0.9174);transform-origin:left center;">Czerwiec</div>
<div class="t" style="left:1661.1px;top:838.8px;font-size:18.59px;color:#4a4a4a;-webkit-text-stroke:0.2px #4a4a4a;transform:scaleX(0.8929);transform-origin:right center;width:60px;text-align:right;">80,50</div>
<div class="r" style="left:1247px;top:829px;width:579px;height:1px;background:#f5f5f5;"></div>
<div class="r" style="left:1248px;top:872.0px;width:16px;height:16px;box-sizing:border-box;border:2px solid #e3e3e3;border-radius:2px;background:#fff"></div>
<div class="t" style="left:1299.2px;top:872.5px;font-size:18.87px;color:#4a4a4a;-webkit-text-stroke:0.2px #4a4a4a;transform:scaleX(0.9009);transform-origin:left center;">2012</div>
<div class="t" style="left:1345.3px;top:872.7px;font-size:18.64px;color:#4a4a4a;-webkit-text-stroke:0.2px #4a4a4a;transform:scaleX(0.9174);transform-origin:left center;">Lipiec</div>
<div class="t" style="left:1661.1px;top:872.8px;font-size:18.59px;color:#4a4a4a;-webkit-text-stroke:0.2px #4a4a4a;transform:scaleX(0.8929);transform-origin:right center;width:60px;text-align:right;">80,50</div>
<div class="r" style="left:1247px;top:863px;width:579px;height:1px;background:#f5f5f5;"></div>
<div class="r" style="left:1248px;top:906.0px;width:16px;height:16px;box-sizing:border-box;border:2px solid #e3e3e3;border-radius:2px;background:#fff"></div>
<div class="t" style="left:1299.2px;top:906.5px;font-size:18.87px;color:#4a4a4a;-webkit-text-stroke:0.2px #4a4a4a;transform:scaleX(0.9009);transform-origin:left center;">2012</div>
<div class="t" style="left:1345.3px;top:906.7px;font-size:18.64px;color:#4a4a4a;-webkit-text-stroke:0.2px #4a4a4a;transform:scaleX(0.9174);transform-origin:left center;">Sierpień</div>
<div class="t" style="left:1661.1px;top:906.8px;font-size:18.59px;color:#4a4a4a;-webkit-text-stroke:0.2px #4a4a4a;transform:scaleX(0.8929);transform-origin:right center;width:60px;text-align:right;">80,50</div>
<div class="r" style="left:1247px;top:897px;width:579px;height:1px;background:#f5f5f5;"></div>
<div class="r" style="left:1248px;top:940.0px;width:16px;height:16px;box-sizing:border-box;border:2px solid #e3e3e3;border-radius:2px;background:#fff"></div>
<div class="t" style="left:1299.2px;top:940.5px;font-size:18.87px;color:#4a4a4a;-webkit-text-stroke:0.2px #4a4a4a;transform:scaleX(0.9009);transform-origin:left center;">2012</div>
<div class="t" style="left:1345.3px;top:940.7px;font-size:18.64px;color:#4a4a4a;-webkit-text-stroke:0.2px #4a4a4a;transform:scaleX(0.9174);transform-origin:left center;">Wrzesień</div>
<div class="t" style="left:1661.1px;top:940.8px;font-size:18.59px;color:#4a4a4a;-webkit-text-stroke:0.2px #4a4a4a;transform:scaleX(0.8929);transform-origin:right center;width:60px;text-align:right;">80,50</div>
<div class="r" style="left:1247px;top:931px;width:579px;height:1px;background:#f5f5f5;"></div>
<div class="r" style="left:1248px;top:974.0px;width:16px;height:16px;box-sizing:border-box;border:2px solid #e3e3e3;border-radius:2px;background:#fff"></div>
<div class="t" style="left:1299.2px;top:974.5px;font-size:18.87px;color:#4a4a4a;-webkit-text-stroke:0.2px #4a4a4a;transform:scaleX(0.9009);transform-origin:left center;">2012</div>
<div class="t" style="left:1345.3px;top:974.7px;font-size:18.64px;color:#4a4a4a;-webkit-text-stroke:0.2px #4a4a4a;transform:scaleX(0.9174);transform-origin:left center;">Październik</div>
<div class="t" style="left:1661.1px;top:974.8px;font-size:18.59px;color:#4a4a4a;-webkit-text-stroke:0.2px #4a4a4a;transform:scaleX(0.8929);transform-origin:right center;width:60px;text-align:right;">80,50</div>
<div class="r" style="left:1247px;top:965px;width:579px;height:1px;background:#f5f5f5;"></div>
<div class="r" style="left:1248px;top:1008.0px;width:16px;height:16px;box-sizing:border-box;border:2px solid #e3e3e3;border-radius:2px;background:#fff"></div>
<div class="t" style="left:1299.2px;top:1008.5px;font-size:18.87px;color:#4a4a4a;-webkit-text-stroke:0.2px #4a4a4a;transform:scaleX(0.9009);transform-origin:left center;">2012</div>
<div class="t" style="left:1345.3px;top:1008.7px;font-size:18.64px;color:#4a4a4a;-webkit-text-stroke:0.2px #4a4a4a;transform:scaleX(0.9174);transform-origin:left center;">Listopad</div>
<div class="t" style="left:1661.1px;top:1008.8px;font-size:18.59px;color:#4a4a4a;-webkit-text-stroke:0.2px #4a4a4a;transform:scaleX(0.8929);transform-origin:right center;width:60px;text-align:right;">80,50</div>
<div class="r" style="left:1247px;top:999px;width:579px;height:1px;background:#f5f5f5;"></div>
<div class="r" style="left:1248px;top:1042.0px;width:16px;height:16px;box-sizing:border-box;border:2px solid #e3e3e3;border-radius:2px;background:#fff"></div>
<div class="t" style="left:1299.2px;top:1042.5px;font-size:18.87px;color:#4a4a4a;-webkit-text-stroke:0.2px #4a4a4a;transform:scaleX(0.9009);transform-origin:left center;">2012</div>
<div class="t" style="left:1345.3px;top:1042.7px;font-size:18.64px;color:#4a4a4a;-webkit-text-stroke:0.2px #4a4a4a;transform:scaleX(0.9174);transform-origin:left center;">Grudzień</div>
<div class="t" style="left:1661.1px;top:1042.8px;font-size:18.59px;color:#4a4a4a;-webkit-text-stroke:0.2px #4a4a4a;transform:scaleX(0.8929);transform-origin:right center;width:60px;text-align:right;">80,50</div>
<div class="r" style="left:1247px;top:1033px;width:579px;height:1px;background:#f5f5f5;"></div>
<svg class="r" style="left:1769px;top:840.5px" width="15" height="11" viewBox="0 0 15 11" fill="none"><path d="M1 6.1 L5.4 9.8 L14 1" stroke="#aaaaaa" stroke-width="1.5" fill="none"/></svg>
<svg class="r" style="left:1769px;top:874.5px" width="15" height="11" viewBox="0 0 15 11" fill="none"><path d="M1 6.1 L5.4 9.8 L14 1" stroke="#aaaaaa" stroke-width="1.5" fill="none"/></svg>
<div class="r" style="left:704px;top:1106px;width:1141px;height:47px;background:#f7f7f7;"></div>
<div class="r" style="left:709px;top:1114px;width:38px;height:35px;background:#fff;box-sizing:border-box;border:1.5px solid #eaeaea;border-radius:2px;"></div>
<div class="r" style="left:751px;top:1114px;width:107px;height:35px;background:#fefefe;box-sizing:border-box;border:1.5px solid #efefef;border-radius:2px;"></div>
<div class="r" style="left:860.6px;top:1114px;width:103.0px;height:35px;background:#fefefe;box-sizing:border-box;border:1.5px solid #efefef;border-radius:2px;"></div>
<div class="r" style="left:1723.4px;top:1113px;width:118.19999999999982px;height:36px;background:#fff;box-sizing:border-box;border:1.5px solid #eaeaea;border-radius:2px;"></div>
<svg class="r" style="left:719.8px;top:1123px" width="16.4" height="18" viewBox="0 0 16.4 18" fill="none"><rect x="0" y="0.0" width="16.4" height="2.3" fill="#7c7c7c"/><rect x="0" y="4.9" width="16.4" height="2.3" fill="#7c7c7c"/><rect x="0" y="9.8" width="16.4" height="2.3" fill="#7c7c7c"/><rect x="0" y="14.7" width="16.4" height="2.3" fill="#7c7c7c"/></svg>
<svg class="r" style="left:769.5px;top:1125px" width="18" height="14" viewBox="0 0 18 14" fill="none"><path d="M1 7.7 L6.5 12.8 L17 1" stroke="#8a9c72" stroke-width="2" fill="none"/></svg>
<div class="t" style="left:796.7px;top:1124.3px;font-size:15.00px;color:#8e8e8e;">Zapisz</div>
<div class="r" style="left:826.5px;top:1138.5px;width:6.0px;height:1.2000000000000455px;background:#9a9a9a;"></div>
<svg class="r" style="left:880.5px;top:1123.5px" width="17" height="16" viewBox="0 0 17 16" fill="none"><path d="M1.5 1.5 L15.5 14.5 M15.5 1.5 L1.5 14.5" stroke="#cc8080" stroke-width="1.8"/></svg>
<div class="t" style="left:906.5px;top:1124.0px;font-size:15.30px;color:#8e8e8e;">Anuluj</div>
<div class="r" style="left:906.7px;top:1139px;width:9.299999999999955px;height:1.2000000000000455px;background:#9a9a9a;"></div>
<svg class="r" style="left:1745px;top:1123px" width="18" height="17" viewBox="0 0 18 17" fill="none"><path d="M2 1.5 L16 15.5 M16 1.5 L2 15.5" stroke="#c85a5a" stroke-width="1.8"/></svg>
<div class="t" style="left:1771.8px;top:1125.5px;font-size:15.40px;color:#3a3a3a;">Zamknij</div>
<div class="r" style="left:1772px;top:1140px;width:9px;height:1.2999999999999545px;background:#444;"></div>
</body></html>
